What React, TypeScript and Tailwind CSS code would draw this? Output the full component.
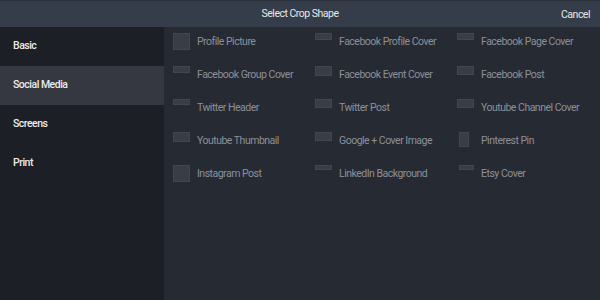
import React from "react";

type Item = { label: string; w: number; h: number };

const items: Item[] = [
  { label: "Profile Picture", w: 17, h: 17 },
  { label: "Facebook Profile Cover", w: 17, h: 7 },
  { label: "Facebook Page Cover", w: 17, h: 7 },
  { label: "Facebook Group Cover", w: 17, h: 7 },
  { label: "Facebook Event Cover", w: 17, h: 10 },
  { label: "Facebook Post", w: 17, h: 9 },
  { label: "Twitter Header", w: 17, h: 6 },
  { label: "Twitter Post", w: 17, h: 9 },
  { label: "Youtube Channel Cover", w: 17, h: 9 },
  { label: "Youtube Thumbnail", w: 17, h: 10 },
  { label: "Google + Cover Image", w: 17, h: 9 },
  { label: "Pinterest Pin", w: 10, h: 15 },
  { label: "Instagram Post", w: 17, h: 17 },
  { label: "LinkedIn Background", w: 17, h: 5 },
  { label: "Etsy Cover", w: 16, h: 5 },
];

const cats = ["Basic", "Social Media", "Screens", "Print"];

export default function App() {
  return (
    <div
      className="w-[600px] h-[300px] flex flex-col bg-[#262a33] overflow-hidden"
      style={{ fontFamily: "Roboto, 'Open Sans', sans-serif" }}
    >
      <div className="h-[27px] shrink-0 bg-[#353d4a] border-t border-[#2a303a] relative flex items-center justify-center">
        <span className="text-[10.5px] tracking-[-0.5px] text-[#e8e8e8]">Select Crop Shape</span>
        <span className="absolute right-[10px] top-[6px] text-[10.5px] tracking-[-0.5px] text-[#e8e8e8]">Cancel</span>
      </div>
      <div className="flex flex-1 min-h-0">
        <div className="w-[164px] shrink-0 bg-[#1c1f26] flex flex-col">
          {cats.map((c) => (
            <div
              key={c}
              className={`h-[39px] flex items-center pl-[13px] pb-[2px] text-[10.5px] font-medium tracking-[-0.5px] text-[#ececec] ${
                c === "Social Media" ? "bg-[#353841]" : ""
              }`}
            >
              {c}
            </div>
          ))}
        </div>
        <div className="flex-1 pt-[6px] pl-[9px]">
          <div className="grid grid-cols-[142px_142px_142px] auto-rows-[33px]">
            {items.map((it) => (
              <div key={it.label} className="flex items-start gap-[7px]">
                <div className="w-[17px] h-[17px] flex justify-start items-start">
                  <div
                    className="bg-[#393d46] border border-[#42464f]"
                    style={{ width: it.w, height: it.h, marginLeft: it.w < 17 ? 2 : 0 }}
                  />
                </div>
                <span className="text-[10.5px] tracking-[-0.5px] leading-[17px] text-[#8c9098]">{it.label}</span>
              </div>
            ))}
          </div>
        </div>
      </div>
    </div>
  );
}
